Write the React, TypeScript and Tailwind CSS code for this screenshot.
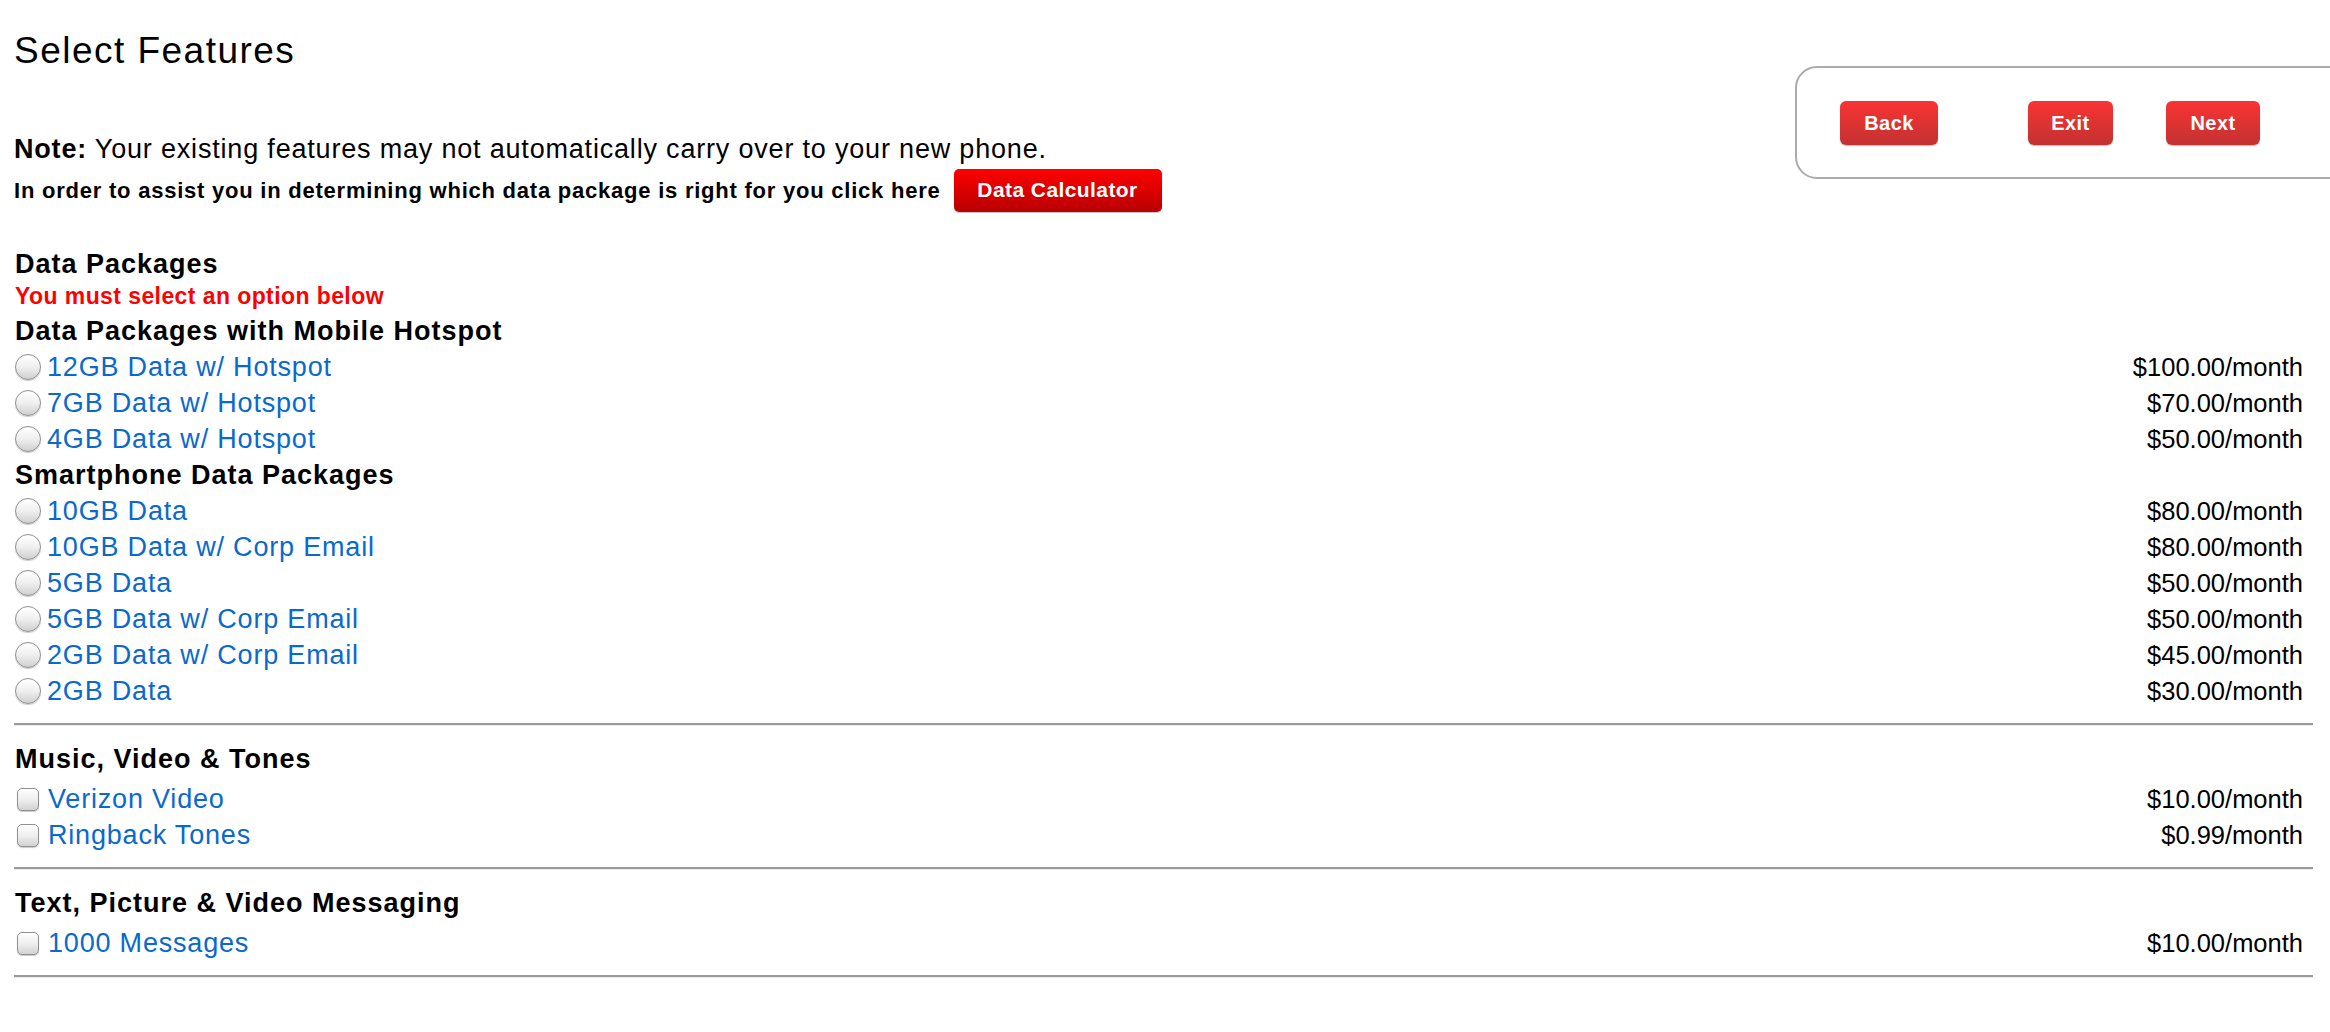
import React from "react";

type Item = { label: string; price: string };

const hotspot: Item[] = [
  { label: "12GB Data w/ Hotspot", price: "$100.00/month" },
  { label: "7GB Data w/ Hotspot", price: "$70.00/month" },
  { label: "4GB Data w/ Hotspot", price: "$50.00/month" },
];

const smartphone: Item[] = [
  { label: "10GB Data", price: "$80.00/month" },
  { label: "10GB Data w/ Corp Email", price: "$80.00/month" },
  { label: "5GB Data", price: "$50.00/month" },
  { label: "5GB Data w/ Corp Email", price: "$50.00/month" },
  { label: "2GB Data w/ Corp Email", price: "$45.00/month" },
  { label: "2GB Data", price: "$30.00/month" },
];

const music: Item[] = [
  { label: "Verizon Video", price: "$10.00/month" },
  { label: "Ringback Tones", price: "$0.99/month" },
];

const messaging: Item[] = [{ label: "1000 Messages", price: "$10.00/month" }];

function Radio() {
  return (
    <span className="ml-[1px] mr-[6px] inline-block h-[26px] w-[26px] shrink-0 rounded-full border border-[#909090] bg-gradient-to-b from-white via-[#efefef] to-[#cfcfcf] shadow-[0_1px_1px_rgba(0,0,0,0.22)]" />
  );
}

function Checkbox() {
  return (
    <span className="ml-[3px] mr-[9px] inline-block h-[23px] w-[22px] shrink-0 rounded-[5px] border border-[#909090] bg-gradient-to-b from-white via-[#efefef] to-[#d2d2d2] shadow-[0_1px_1px_rgba(0,0,0,0.22)]" />
  );
}

function Row({ item, kind }: { item: Item; kind: "radio" | "check" }) {
  return (
    <div className="flex h-[36px] items-center justify-between pr-[10px]">
      <label className="flex items-center">
        {kind === "radio" ? <Radio /> : <Checkbox />}
        <span className="text-[27px] leading-[36px] tracking-[0.03em] text-[#0a69cc]">
          {item.label}
        </span>
      </label>
      <span className="text-[25.5px] leading-[36px] text-black">{item.price}</span>
    </div>
  );
}

function Heading({ children }: { children: React.ReactNode }) {
  return (
    <div className="pl-[1px] text-[27px] font-bold leading-[36px] tracking-[0.037em] text-black">
      {children}
    </div>
  );
}

function Rule() {
  return <div className="h-[3px] border-t-2 border-b border-t-[#9a9a9a] border-b-[#ececec]" />;
}

function RedButton({ children, w }: { children: React.ReactNode; w: string }) {
  return (
    <button
      className={`${w} h-[44px] rounded-[6px] bg-gradient-to-b from-[#fa3333] to-[#c33131] text-[20px] font-bold tracking-[0.02em] text-white shadow-[0_1px_1px_rgba(0,0,0,0.25)]`}
    >
      {children}
    </button>
  );
}

export default function App() {
  return (
    <div className="h-[1032px] w-[2330px] overflow-hidden bg-white font-['Liberation_Sans',Arial,Helvetica,sans-serif] text-black">
      <div className="flex">
        <div className="flex-1 pl-[14px]">
          <h1 className="pt-[29px] text-[37px] font-normal leading-[44px] tracking-[0.04em]">
            Select Features
          </h1>
          <p className="mt-[58px] text-[27px] leading-[36px] tracking-[0.03em]">
            <span className="font-bold">Note:</span> Your existing features may not automatically carry
            over to your new phone.
          </p>
          <div className="mt-[2px] flex h-[42px] items-center">
            <span className="text-[22px] font-bold tracking-[0.035em]">
              In order to assist you in determining which data package is right for you click here
            </span>
            <button className="ml-[13px] h-[43px] w-[208px] rounded-[5px] bg-gradient-to-b from-[#ff0000] to-[#b80000] text-[21px] font-bold tracking-[0.02em] text-white shadow-[0_1px_1px_rgba(0,0,0,0.25)]">
              Data Calculator
            </button>
          </div>
        </div>
        <div className="-mr-[25px] mt-[66px] flex h-[113px] w-[560px] shrink-0 items-center rounded-[22px] border-2 border-[#ababab] pl-[43px]">
          <RedButton w="w-[98px]">Back</RedButton>
          <div className="ml-[90px]">
            <RedButton w="w-[85px]">Exit</RedButton>
          </div>
          <div className="ml-[53px]">
            <RedButton w="w-[94px]">Next</RedButton>
          </div>
        </div>
      </div>

      <div className="ml-[14px] w-[2299px]">
        <div className="mt-[37px] pl-[1px] text-[27px] font-bold leading-[32px] tracking-[0.037em]">
          Data Packages
        </div>
        <div className="pl-[1px] text-[23px] font-bold leading-[33px] tracking-[0.018em] text-[#ff0000]">
          You must select an option below
        </div>
        <Heading>Data Packages with Mobile Hotspot</Heading>
        {hotspot.map((it) => (
          <Row key={it.label} item={it} kind="radio" />
        ))}
        <Heading>Smartphone Data Packages</Heading>
        {smartphone.map((it) => (
          <Row key={it.label} item={it} kind="radio" />
        ))}
        <div className="mt-[14px]">
          <Rule />
        </div>

        <div className="mt-[15px]">
          <Heading>Music, Video &amp; Tones</Heading>
        </div>
        <div className="mt-[4px]">
          {music.map((it) => (
            <Row key={it.label} item={it} kind="check" />
          ))}
        </div>
        <div className="mt-[14px]">
          <Rule />
        </div>

        <div className="mt-[15px]">
          <Heading>Text, Picture &amp; Video Messaging</Heading>
        </div>
        <div className="mt-[4px]">
          {messaging.map((it) => (
            <Row key={it.label} item={it} kind="check" />
          ))}
        </div>
        <div className="mt-[14px]">
          <Rule />
        </div>
      </div>
    </div>
  );
}
